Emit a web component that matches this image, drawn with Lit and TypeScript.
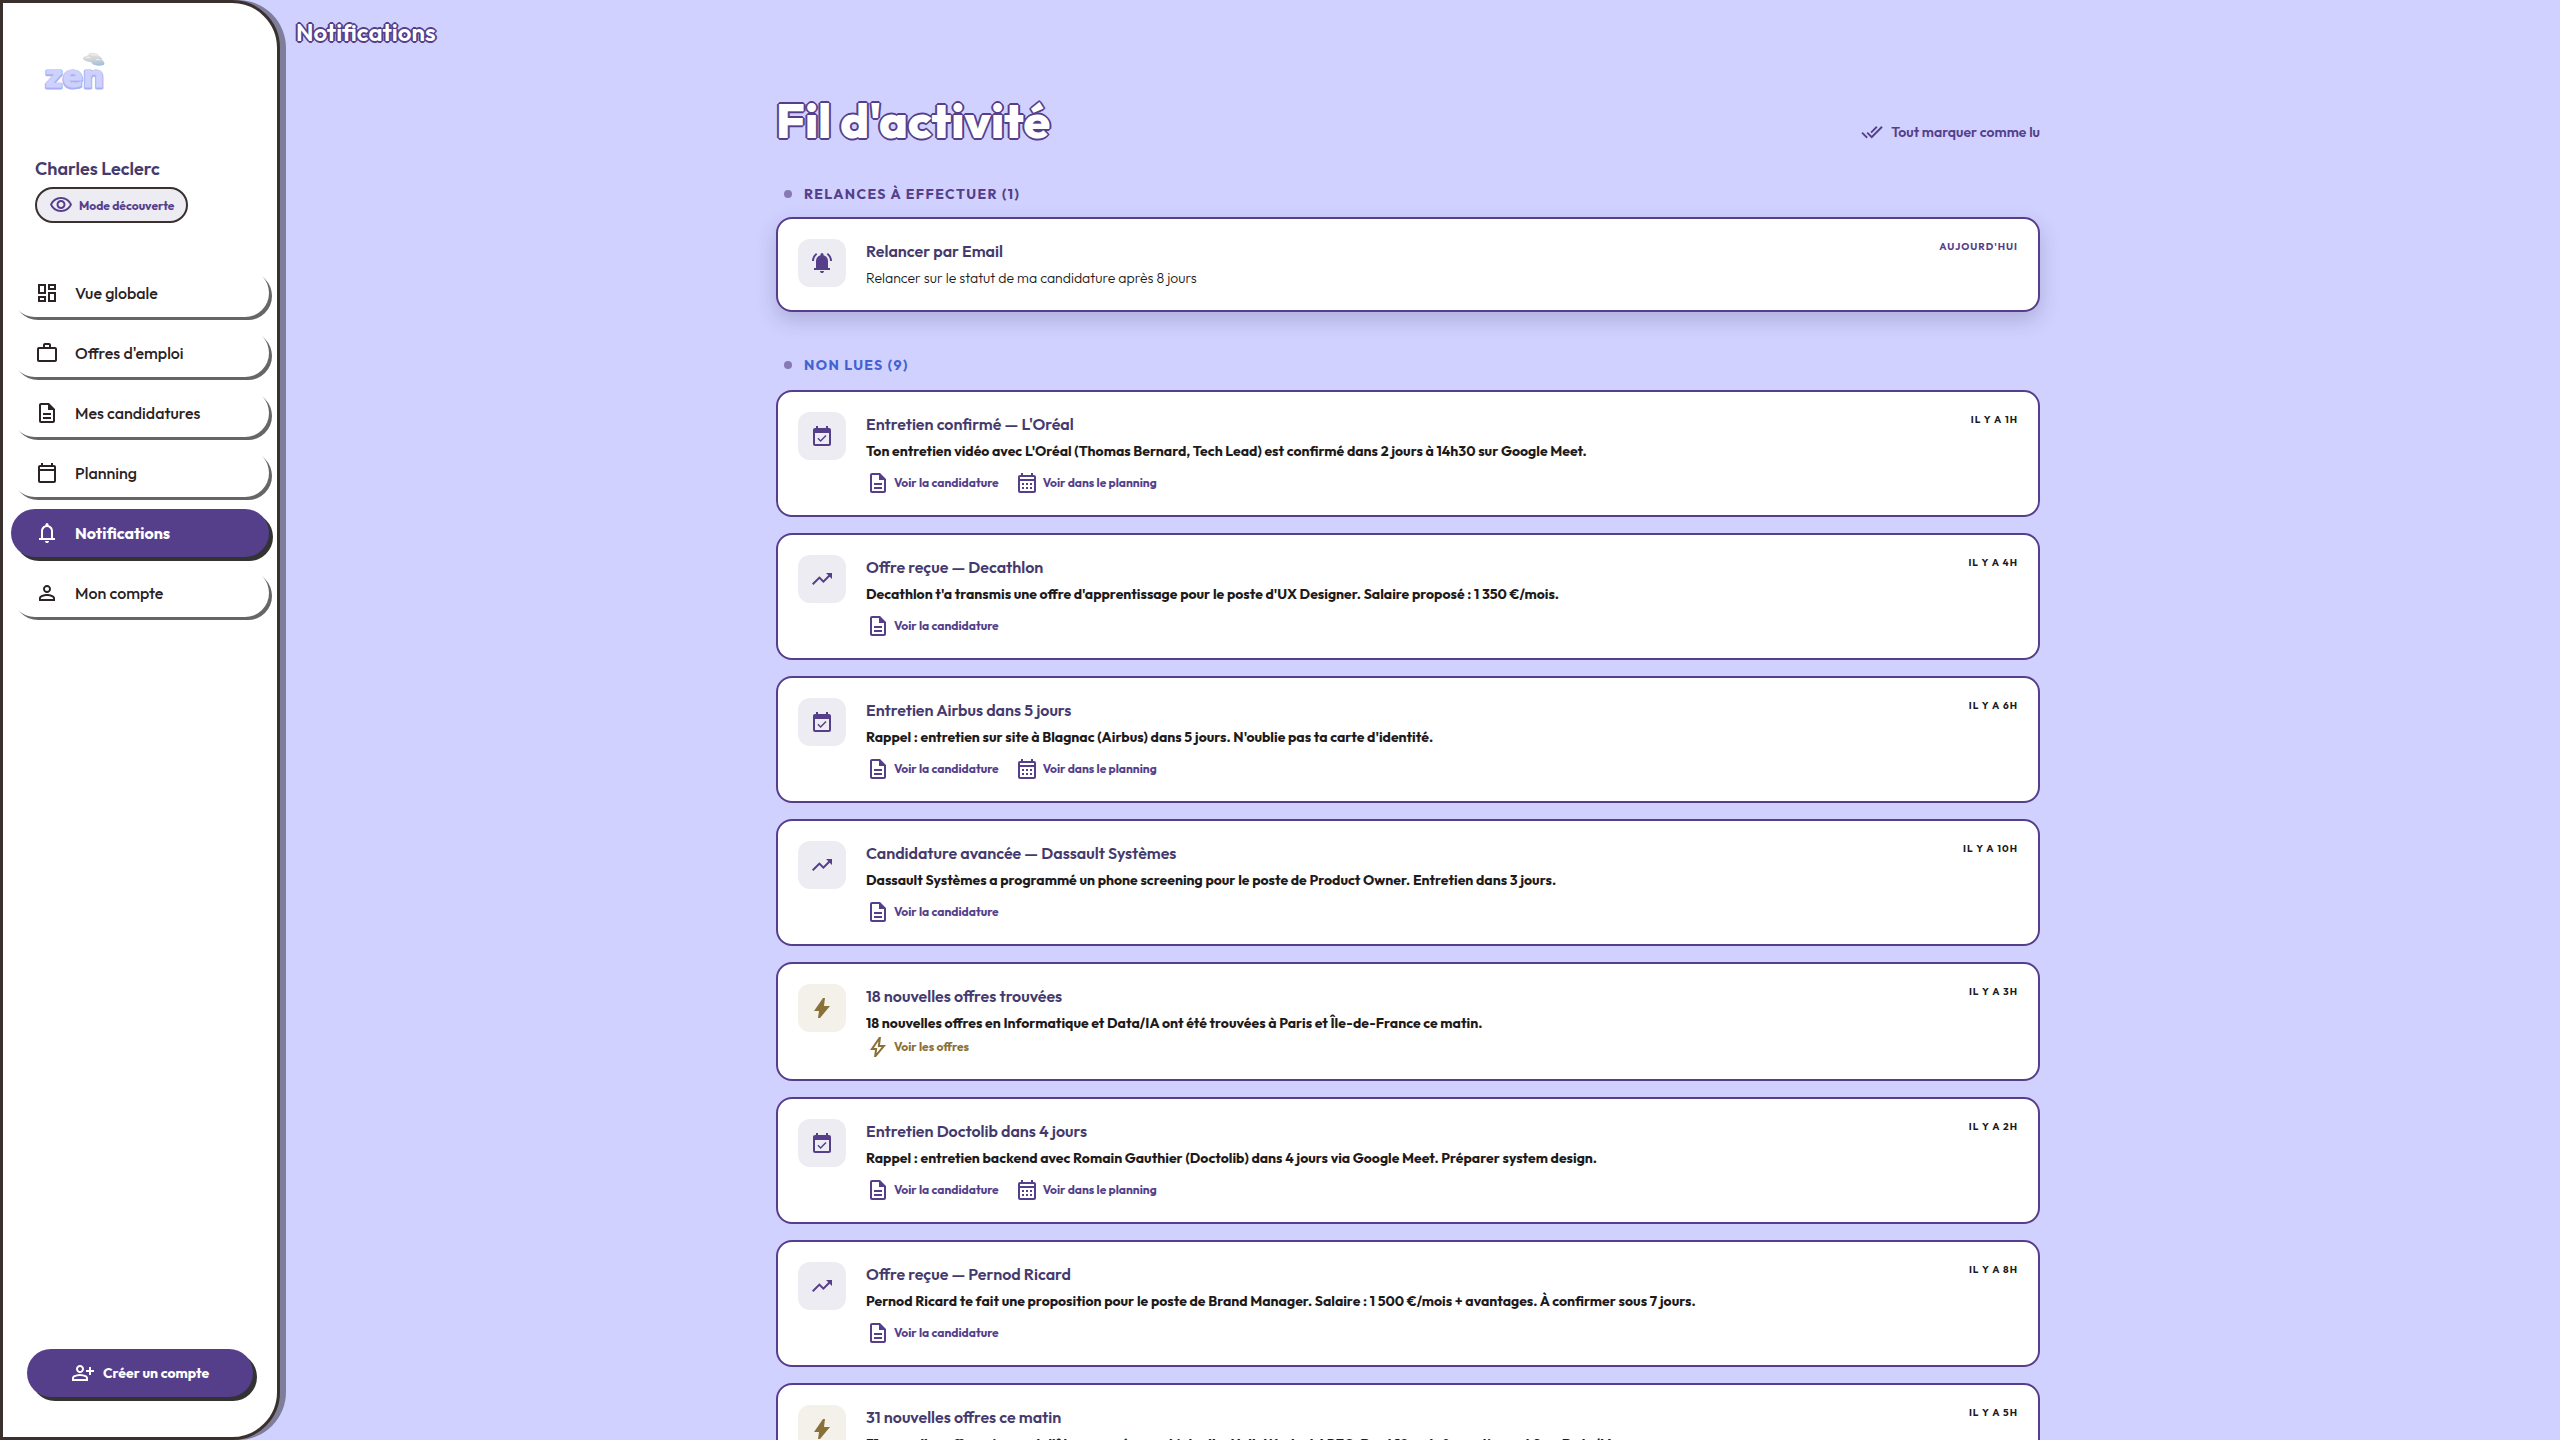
import { LitElement, html, css, svg } from "lit";
import { customElement, property } from "lit/decorators.js";

const ICONS: Record<string, string> = {
  dashboard: "M19 5v2h-4V5h4M9 5v6H5V5h4m10 8v6h-4v-6h4M9 17v2H5v-2h4M21 3h-8v6h8V3zM11 3H3v10h8V3zm10 8h-8v10h8V11zm-10 4H3v6h8v-6z",
  work: "M20 6h-4V4c0-1.11-.89-2-2-2h-4c-1.11 0-2 .89-2 2v2H4c-1.11 0-1.99.89-1.99 2L2 19c0 1.11.89 2 2 2h16c1.11 0 2-.89 2-2V8c0-1.11-.89-2-2-2zm-6 0h-4V4h4v2zm6 13H4V8h16v11z",
  document: "M8 16h8v2H8zm0-4h8v2H8zm6-10H6c-1.1 0-2 .9-2 2v16c0 1.1.89 2 1.99 2H18c1.1 0 2-.9 2-2V8l-6-6zm4 18H6V4h7v5h5v11z",
  calendar: "M19 4h-1V2h-2v2H8V2H6v2H5c-1.1 0-2 .9-2 2v14a2 2 0 0 0 2 2h14c1.1 0 2-.9 2-2V6c0-1.1-.9-2-2-2zm0 16H5V10h14v10zm0-12H5V6h14v2z",
  month: "M19 4h-1V2h-2v2H8V2H6v2H5c-1.1 0-2 .9-2 2v14a2 2 0 0 0 2 2h14c1.1 0 2-.9 2-2V6c0-1.1-.9-2-2-2zm0 16H5V10h14v10zm0-12H5V6h14v2zM7 12h2v2H7zm4 0h2v2h-2zm4 0h2v2h-2zm-8 4h2v2H7zm4 0h2v2h-2zm4 0h2v2h-2z",
  event: "M16.53 12.06L15.47 11l-4.88 4.88-2.12-2.12-1.06 1.06L10.59 18l5.94-5.94zM19 4h-1V2h-2v2H8V2H6v2H5c-1.11 0-1.99.9-1.99 2L3 20a2 2 0 0 0 2 2h14c1.1 0 2-.9 2-2V6c0-1.1-.9-2-2-2zm0 16H5V9h14v11z",
  bell: "M4 19v-2h2v-7q0-2.075 1.25-3.687T10.5 4.2v-.7q0-.625.438-1.062T12 2t1.063.438T13.5 3.5v.7q2 .5 3.25 2.113T18 10v7h2v2zm8 3q-.825 0-1.412-.587T10 20h4q0 .825-.587 1.413T12 22m-4-5h8v-7q0-1.65-1.175-2.825T12 6T9.175 7.175T8 10z",
  alarm: "M4 19v-2h2v-7q0-2.075 1.25-3.687T10.5 4.2v-.7q0-.625.438-1.062T12 2t1.063.438T13.5 3.5v.7q2 .5 3.25 2.113T18 10v7h2v2zm8 3q-.825 0-1.412-.587T10 20h4q0 .825-.587 1.413T12 22M2 10q0-2.5 1.113-4.587T6.1 1.95l1.175 1.6q-1.5 1.1-2.387 2.775T4 10zm18 0q0-2-.888-3.675T16.726 3.55l1.175-1.6q1.875 1.375 2.988 3.463T22 10z",
  person: "M12 5.9a2.1 2.1 0 1 1 0 4.2 2.1 2.1 0 0 1 0-4.2m0 9c2.97 0 6.1 1.46 6.1 2.1v1.1H5.9V17c0-.64 3.13-2.1 6.1-2.1M12 4C9.79 4 8 5.79 8 8s1.79 4 4 4 4-1.79 4-4-1.79-4-4-4zm0 9c-2.67 0-8 1.34-8 4v3h16v-3c0-2.66-5.33-4-8-4z",
  personAdd: "M18 14v-3h-3V9h3V6h2v3h3v2h-3v3zm-9-2q-1.65 0-2.825-1.175T5 8t1.175-2.825T9 4t2.825 1.175T13 8t-1.175 2.825T9 12m-8 8v-2.8q0-.85.438-1.562T2.6 14.55q1.55-.775 3.15-1.162T9 13t3.25.388t3.15 1.162q.725.375 1.163 1.088T17 17.2V20zm2-2h12v-.8q0-.275-.137-.5t-.363-.35q-1.35-.675-2.725-1.012T9 15t-2.775.338T3.5 16.35q-.225.125-.363.35T3 17.2zm6-8q.825 0 1.413-.587T11 8t-.587-1.412T9 6t-1.412.588T7 8t.588 1.413T9 10",
  eye: "M12 6c3.79 0 7.17 2.13 8.82 5.5C19.17 14.87 15.79 17 12 17s-7.17-2.13-8.82-5.5C4.83 8.13 8.21 6 12 6m0-2C7 4 2.73 7.11 1 11.5 2.73 15.89 7 19 12 19s9.27-3.11 11-7.5C21.27 7.11 17 4 12 4zm0 5c1.38 0 2.5 1.12 2.5 2.5S13.38 14 12 14s-2.5-1.12-2.5-2.5S10.62 9 12 9m0-2c-2.48 0-4.5 2.02-4.5 4.5S9.52 16 12 16s4.5-2.02 4.5-4.5S14.48 7 12 7z",
  doneAll: "M18 7l-1.41-1.41-6.34 6.34 1.41 1.41L18 7zm4.24-1.41L11.66 16.17 7.48 12l-1.41 1.41L11.66 19l12-12-1.42-1.41zM.41 13.41L6 19l1.41-1.41L1.83 12 .41 13.41z",
  trend: "M16 6l2.29 2.29-4.88 4.88-4-4L2 16.59 3.41 18l6-6 4 4 6.3-6.29L22 12V6z",
  bolt: "m8 22 1-7H4l9-13h2l-1 8h6L10 22z",
  boltOutline: "m10.55 18.2 5.175-6.2h-4l.725-5.675L7.825 13H11.3zM8 22l1-7H4l9-13h2l-1 8h6L10 22z",
};

const icon = (name: string) =>
  html`<svg class="icon" viewBox="0 0 24 24" aria-hidden="true">${svg`<path fill-rule="evenodd" d=${ICONS[name]}></path>`}</svg>`;

const shared = css`
  * { box-sizing: border-box; }
  h1, h2, h3, p { margin: 0; padding: 0; }
  a { color: inherit; text-decoration: none; }
  button { font: inherit; color: inherit; border: 0; background: none; padding: 0; cursor: pointer; }
  .icon { width: 24px; height: 24px; fill: currentColor; flex: none; display: block; }
`;

interface Action { icon: string; label: string; }
interface Notice { icon: string; title: string; text: string; time: string; actions: Action[]; gold?: boolean; }

const CANDIDATURE: Action = { icon: "document", label: "Voir la candidature" };
const PLANNING: Action = { icon: "month", label: "Voir dans le planning" };
const OFFRES: Action = { icon: "boltOutline", label: "Voir les offres" };

const REMINDERS: Notice[] = [
  { icon: "alarm", title: "Relancer par Email", text: "Relancer sur le statut de ma candidature après 8 jours", time: "Aujourd'hui", actions: [] },
];

const UNREAD: Notice[] = [
  { icon: "event", title: "Entretien confirmé — L'Oréal", text: "Ton entretien vidéo avec L'Oréal (Thomas Bernard, Tech Lead) est confirmé dans 2 jours à 14h30 sur Google Meet.", time: "Il y a 1h", actions: [CANDIDATURE, PLANNING] },
  { icon: "trend", title: "Offre reçue — Decathlon", text: "Decathlon t'a transmis une offre d'apprentissage pour le poste d'UX Designer. Salaire proposé : 1 350 €/mois.", time: "Il y a 4h", actions: [CANDIDATURE] },
  { icon: "event", title: "Entretien Airbus dans 5 jours", text: "Rappel : entretien sur site à Blagnac (Airbus) dans 5 jours. N'oublie pas ta carte d'identité.", time: "Il y a 6h", actions: [CANDIDATURE, PLANNING] },
  { icon: "trend", title: "Candidature avancée — Dassault Systèmes", text: "Dassault Systèmes a programmé un phone screening pour le poste de Product Owner. Entretien dans 3 jours.", time: "Il y a 10h", actions: [CANDIDATURE] },
  { icon: "bolt", title: "18 nouvelles offres trouvées", text: "18 nouvelles offres en Informatique et Data/IA ont été trouvées à Paris et Île-de-France ce matin.", time: "Il y a 3h", actions: [OFFRES], gold: true },
  { icon: "event", title: "Entretien Doctolib dans 4 jours", text: "Rappel : entretien backend avec Romain Gauthier (Doctolib) dans 4 jours via Google Meet. Préparer system design.", time: "Il y a 2h", actions: [CANDIDATURE, PLANNING] },
  { icon: "trend", title: "Offre reçue — Pernod Ricard", text: "Pernod Ricard te fait une proposition pour le poste de Brand Manager. Salaire : 1 500 €/mois + avantages. À confirmer sous 7 jours.", time: "Il y a 8h", actions: [CANDIDATURE] },
  { icon: "bolt", title: "31 nouvelles offres ce matin", text: "31 nouvelles offres viennent d'être scannées sur LinkedIn, HelloWork et APEC. Dont 12 en Informatique et 8 en Data/IA.", time: "Il y a 5h", actions: [OFFRES], gold: true },
];

const NAV = [
  { icon: "dashboard", label: "Vue globale" },
  { icon: "work", label: "Offres d'emploi" },
  { icon: "document", label: "Mes candidatures" },
  { icon: "calendar", label: "Planning" },
  { icon: "bell", label: "Notifications", active: true },
  { icon: "person", label: "Mon compte" },
];

@customElement("zen-sidebar")
export class ZenSidebar extends LitElement {
  static styles = [shared, css`
    :host { display: flex; flex: none; }
    .side {
      width: 280px; display: flex; flex-direction: column; background: #fff;
      border: 3px solid #3a302e; border-radius: 0 48px 48px 0;
      box-shadow: 6px 0 0 rgba(46, 44, 54, 0.5); padding: 48px 8px 40px;
    }
    .logo { width: 64px; height: 44px; margin-left: 32px; display: block; overflow: visible; }
    .word { font: 700 30px "DejaVu Sans", sans-serif; stroke-linejoin: round; paint-order: stroke; }
    .word.edge { fill: #a9aff6; stroke: #a9aff6; stroke-width: 3px; }
    .word.face { fill: #cdd1fb; stroke: #cdd1fb; stroke-width: 1px; }
    .user { margin: 62px 0 0 24px; display: flex; flex-direction: column; align-items: flex-start; gap: 6px; }
    .name { font-size: 18px; line-height: 24px; font-weight: 600; color: #453a6d; }
    .mode {
      display: flex; align-items: center; gap: 6px; height: 36px; padding: 0 12px;
      border: 2px solid #3a302e; border-radius: 18px; background: #edecf3;
      color: #553f8b; font-size: 12px; font-weight: 700; white-space: nowrap;
    }
    .nav { margin-top: 46px; display: flex; flex-direction: column; gap: 12px; }
    .item {
      display: flex; align-items: center; gap: 16px; height: 48px; padding: 0 24px;
      border-radius: 24px; background: #fff; box-shadow: 3px 3px 0 #666;
      color: #2a2223; font-size: 16px; font-weight: 500;
    }
    .item.active { background: #553f8b; color: #fff; font-weight: 700; box-shadow: 4px 4px 0 #333; }
    .cta {
      margin: auto 16px 0; height: 48px; border-radius: 24px; background: #553f8b; color: #fff;
      box-shadow: 4px 4px 0 #333; display: flex; align-items: center; justify-content: center;
      gap: 8px; font-size: 14px; font-weight: 700;
    }
  `];

  render() {
    return html`
      <aside class="side">
        <svg class="logo" viewBox="0 0 64 44" role="img" aria-label="zen">
          <defs>
            <linearGradient id="cloud" x1="0" y1="0" x2="0.2" y2="1">
              <stop offset="0" stop-color="#ece7e2"></stop>
              <stop offset="0.55" stop-color="#d3d4d6"></stop>
              <stop offset="1" stop-color="#a5c3e0"></stop>
            </linearGradient>
          </defs>
          <path fill="url(#cloud)" d="M40 8c0-2 2-3 4-3 1-2 4-4 7-3 2 0 4 1 5 3 2 1 3 2 3 4 2 1 3 3 2 5-3 1-7 1-9 0-2 0-3-1-4-3-3 0-7-1-8-3z"></path>
          <path fill="none" stroke="#f8f5f1" stroke-width="1" stroke-linecap="round" d="M43 7c1-1 3-1 4 0M49 4c2-1 4 0 5 1M53 9c1-1 3-1 4 0"></path>
          <text class="word edge" x="2" y="37">zen</text>
          <text class="word face" x="2" y="36" aria-hidden="true">zen</text>
        </svg>
        <div class="user">
          <div class="name">Charles Leclerc</div>
          <button class="mode" type="button">${icon("eye")}Mode découverte</button>
        </div>
        <nav class="nav">
          ${NAV.map((n) => html`<a class="item ${n.active ? "active" : ""}" href="#">${icon(n.icon)}<span>${n.label}</span></a>`)}
        </nav>
        <button class="cta" type="button">${icon("personAdd")}<span>Créer un compte</span></button>
      </aside>`;
  }
}

@customElement("notice-card")
export class NoticeCard extends LitElement {
  @property({ attribute: false }) notice!: Notice;
  @property({ type: Boolean }) reminder = false;

  static styles = [shared, css`
    :host { display: block; }
    .card {
      display: flex; gap: 20px; padding: 20px; background: #fff;
      border: 2px solid #553f8b; border-radius: 16px;
    }
    .card.reminder { box-shadow: 0 8px 20px rgba(60, 50, 90, 0.22); }
    .tile {
      flex: none; width: 48px; height: 48px; border-radius: 12px; background: #edecf3; color: #553f8b;
      display: flex; align-items: center; justify-content: center;
    }
    .gold .tile { background: #f4f1eb; color: #8a7137; }
    .body { flex: 1; min-width: 0; }
    .title { font-size: 16px; line-height: 24px; font-weight: 600; color: #453a6d; }
    .text { font-size: 14px; line-height: 23px; margin-top: 4px; font-weight: 700; color: #211a1b; }
    .reminder .text { font-weight: 300; }
    .actions { display: flex; gap: 16px; margin-top: 8px; color: #553f8b; }
    .gold .actions { margin-top: 0; color: #8a7137; }
    .action { display: flex; align-items: center; gap: 4px; font-size: 12px; line-height: 24px; font-weight: 700; }
    .time {
      flex: none; font-size: 10px; line-height: 16px; font-weight: 700; letter-spacing: 1px;
      text-transform: uppercase; color: #211a1b;
    }
    .reminder .time { color: #553f8b; }
  `];

  render() {
    const n = this.notice;
    return html`
      <article class="card ${this.reminder ? "reminder" : ""} ${n.gold ? "gold" : ""}">
        <div class="tile">${icon(n.icon)}</div>
        <div class="body">
          <h3 class="title">${n.title}</h3>
          <p class="text">${n.text}</p>
          ${n.actions.length
            ? html`<div class="actions">${n.actions.map((a) => html`<a class="action" href="#">${icon(a.icon)}${a.label}</a>`)}</div>`
            : null}
        </div>
        <time class="time">${n.time}</time>
      </article>`;
  }
}

@customElement("app-root")
export class AppRoot extends LitElement {
  static styles = [shared, css`
    :host {
      display: flex; height: 100vh; overflow: hidden; background: #d0d1ff;
      font-family: Outfit, Lato, sans-serif;
    }
    .main { flex: 1; min-width: 0; overflow-y: auto; scrollbar-width: none; padding: 0 40px 40px 16px; }
    .outlined {
      color: #fff;
      text-shadow: -1px -1px 0 #553f8b, 1px -1px 0 #553f8b, -1px 1px 0 #553f8b, 1px 1px 0 #553f8b,
        0 -2px 0 #553f8b, 0 2px 0 #553f8b, -2px 0 0 #553f8b, 2px 0 0 #553f8b;
    }
    .page { font-size: 24px; line-height: 32px; font-weight: 600; padding-top: 16px; }
    .feed { max-width: 1264px; margin: 0 auto; }
    .head { display: flex; justify-content: space-between; align-items: flex-end; padding-top: 42px; }
    .heading { font-size: 48px; line-height: 60px; font-weight: 800; }
    .all { display: flex; align-items: center; gap: 8px; color: #553f8b; font-size: 14px; line-height: 20px; font-weight: 600; padding-bottom: 7px; }
    .all .icon { width: 22px; height: 22px; }
    .label {
      display: flex; align-items: center; gap: 12px; padding-left: 8px; line-height: 20px;
      font-size: 14px; font-weight: 700; letter-spacing: 0.1em; text-transform: uppercase; color: #553f8b;
    }
    .label::before { content: ""; width: 8px; height: 8px; border-radius: 4px; background: #8878b6; }
    .due { margin: 34px 0 13px; }
    .unread { margin: 43px 0 15px; color: #4361d0; }
    .list { display: flex; flex-direction: column; gap: 16px; }
  `];

  render() {
    return html`
      <zen-sidebar></zen-sidebar>
      <main class="main">
        <h1 class="page outlined">Notifications</h1>
        <div class="feed">
          <div class="head">
            <h2 class="heading outlined">Fil d'activité</h2>
            <button class="all" type="button">${icon("doneAll")}Tout marquer comme lu</button>
          </div>
          <h3 class="label due">Relances à effectuer (1)</h3>
          <div class="list">${REMINDERS.map((n) => html`<notice-card .notice=${n} reminder></notice-card>`)}</div>
          <h3 class="label unread">Non lues (9)</h3>
          <div class="list">${UNREAD.map((n) => html`<notice-card .notice=${n}></notice-card>`)}</div>
        </div>
      </main>`;
  }
}
